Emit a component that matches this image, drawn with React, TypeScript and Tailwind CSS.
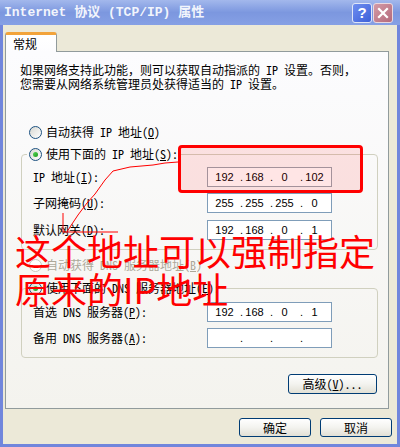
import React from 'react';

const ui = "font-['Noto_Sans_Mono_CJK_SC','Liberation_Mono','Noto_Sans_CJK_SC',monospace] text-[12px]";

const Radio = ({ checked, disabled }: { checked?: boolean; disabled?: boolean }) => (
  <span
    className={`flex h-[13px] w-[13px] shrink-0 items-center justify-center rounded-full border ${
      disabled ? 'border-[#cac8bb] bg-white' : 'border-[#1c5180] bg-gradient-to-br from-[#d8d8d2] to-white'
    }`}
  >
    {checked && <span className="h-[5px] w-[5px] rounded-full bg-gradient-to-br from-[#55d555] to-[#1a9a1a]" />}
  </span>
);

const IpField = ({ parts, className = 'border-[#7f9db9]' }: { parts: string[]; className?: string }) => (
  <div className={`flex h-[20px] w-[125px] items-center border bg-white font-['Liberation_Sans',sans-serif] text-[11px] text-black ${className}`}>
    {parts.map((p, i) => (
      <React.Fragment key={i}>
        <span className={`${i === 0 ? 'w-[5px]' : 'w-[7px]'} text-right`}>{i > 0 ? '.' : ''}</span>
        <span className="w-[23px] text-center">{p}</span>
      </React.Fragment>
    ))}
  </div>
);

const Row = ({ label, keyChar, parts, className, field }: {
  label: string; keyChar: string; parts: string[]; className?: string; field?: string;
}) => (
  <div className={`flex h-[20px] items-center pl-[11px] ${className}`}>
    <span className="w-[174px] whitespace-pre">
      {label}(<span className="underline">{keyChar}</span>):
    </span>
    <IpField parts={parts} className={field} />
  </div>
);

const XpButton = ({ children, className }: { children: React.ReactNode; className?: string }) => (
  <div
    className={`flex items-center justify-center rounded-[3px] border border-[#003c74] bg-gradient-to-b from-white via-[#f3f3ef] to-[#e2e0d5] text-black ${className}`}
  >
    {children}
  </div>
);

export default function App() {
  return (
    <div className={`relative flex h-[447px] w-[400px] flex-col overflow-hidden ${ui}`}>
      {/* title bar */}
      <div className="flex h-[25px] shrink-0 items-center justify-between bg-gradient-to-b from-[#a3b8ec] via-[#7c97df] to-[#86a0e5] pl-[4px] pr-[7px]">
        <span className="font-['Liberation_Mono','Noto_Sans_CJK_SC',monospace] text-[13px] font-bold text-[#f2f5fc] whitespace-pre">
          Internet 协议 (TCP/IP) 属性
        </span>
        <div className="flex gap-[1px] pt-[1px]">
          <div className="flex h-[20px] w-[20px] items-center justify-center rounded-[3px] border border-[#dfe6f8] bg-gradient-to-br from-[#6f8ef0] to-[#3e60d8] font-['Liberation_Sans',sans-serif] text-[15px] font-bold text-white">
            ?
          </div>
          <div className="flex h-[20px] w-[20px] items-center justify-center rounded-[3px] border border-[#ead8df] bg-gradient-to-br from-[#d39aa6] to-[#b46a7c]">
            <svg width="12" height="12" viewBox="0 0 12 12">
              <path d="M2 2 L10 10 M10 2 L2 10" stroke="white" strokeWidth="2.2" strokeLinecap="square" />
            </svg>
          </div>
        </div>
      </div>

      {/* body */}
      <div className="flex flex-1 flex-col border-x-[3px] border-b-[3px] border-[#7186dc] bg-[#ece9d8] pt-[7px] pl-[2px]">
        <div className="flex">
          <div className="relative z-10 -mb-px h-[20px] w-[52px] rounded-t-[3px] border-x border-[#919b9c] border-t-[3px] border-t-[#f2a33a] bg-gradient-to-b from-white to-[#fcfcfe] pl-[7px] pt-[1px] leading-[15px] text-black">
            常规
          </div>
        </div>
        <div className="flex h-[358px] w-[384px] flex-col border border-[#919b9c] bg-gradient-to-b from-[#fcfcfe] to-[#f4f3ee] text-black">
          <p className="mt-[11px] pl-[14px] leading-[14px] whitespace-pre">
            如果网络支持此功能，则可以获取自动指派的 IP 设置。否则，
            <br />
            您需要从网络系统管理员处获得适当的 IP 设置。
          </p>

          <div className="mt-[34px] flex h-[14px] items-center gap-[4px] pl-[23px]">
            <Radio />
            <span>
              自动获得 IP 地址(<span className="underline">O</span>)
            </span>
          </div>

          <fieldset className="mt-[8px] ml-[15px] w-[357px] rounded-[4px] border border-[#d0d0bf] pb-[9px]">
            <legend className="ml-[5px] px-[2px]">
              <span className="flex h-[14px] items-center gap-[4px]">
                <Radio checked />
                <span>
                  使用下面的 IP 地址(<span className="underline">S</span>):
                </span>
              </span>
            </legend>
            <Row className="mt-[6px]" label="IP 地址" keyChar="I" parts={['192', '168', '0', '102']} field="border-[#9aa3ad]" />
            <Row className="mt-[6px]" label="子网掩码" keyChar="U" parts={['255', '255', '255', '0']} />
            <Row className="mt-[7px]" label="默认网关" keyChar="D" parts={['192', '168', '0', '1']} />
          </fieldset>

          <div className="mt-[8px] flex h-[14px] items-center gap-[4px] pl-[23px] text-[#aca899]">
            <Radio disabled />
            <span>
              自动获得 DNS 服务器地址(<span className="underline">B</span>)
            </span>
          </div>

          <fieldset className="mt-[9px] ml-[15px] w-[357px] rounded-[4px] border border-[#d0d0bf] pb-[9px]">
            <legend className="ml-[5px] px-[2px]">
              <span className="flex h-[14px] items-center gap-[4px]">
                <Radio checked />
                <span>
                  使用下面的 DNS 服务器地址(<span className="underline">E</span>):
                </span>
              </span>
            </legend>
            <Row className="mt-[7px]" label="首选 DNS 服务器" keyChar="P" parts={['192', '168', '0', '1']} />
            <Row className="mt-[6px]" label="备用 DNS 服务器" keyChar="A" parts={['', '', '', '']} />
          </fieldset>

          <div className="mt-[16px] flex justify-end pr-[11px]">
            <XpButton className="h-[20px] w-[89px]">
              高级(<span className="underline">V</span>)...
            </XpButton>
          </div>
        </div>

        <div className="mt-[9px] flex justify-end gap-[9px] pr-[5px]">
          <XpButton className="h-[19px] w-[72px]">确定</XpButton>
          <XpButton className="h-[19px] w-[72px]">取消</XpButton>
        </div>
      </div>

      {/* red annotations drawn over the dialog */}
      <div className="pointer-events-none absolute left-[178px] top-[145px] h-[48px] w-[185px] rounded-[4px] border-[3px] border-[#ff0000] bg-[#ff0000]/10" />
      <svg className="pointer-events-none absolute left-0 top-0" width="400" height="447">
        <polyline
          points="178,162 165,163 153,165 130,167 113,171 105,180 100,187 95,194 87,203 78,215 70,227 67,232"
          fill="none"
          stroke="#ff0000"
          strokeWidth="1"
        />
        <polyline points="63,213 63,232 118,232" fill="none" stroke="#ff0000" strokeWidth="1" />
      </svg>
      <div className="pointer-events-none absolute left-[15px] top-[231px] font-['Noto_Sans_CJK_SC',sans-serif] text-[36px] leading-[38px] text-[#ff0000]">
        这个地址可以强制指定
        <br />
        原来的IP地址
      </div>
    </div>
  );
}
